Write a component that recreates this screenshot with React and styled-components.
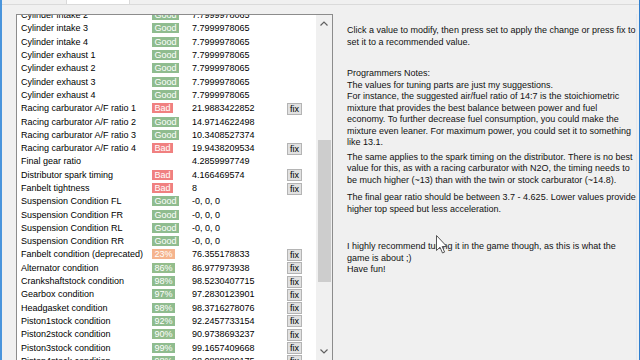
import React from "react";
import styled, { createGlobalStyle } from "styled-components";

const GlobalStyle = createGlobalStyle`
  html, body {
    margin: 0;
    padding: 0;
    background: #f0f0f0;
  }
  body {
    font-family: "Liberation Sans", Arial, sans-serif;
    font-size: 9px;
    color: #000;
  }
`;

const Window = styled.div`
  position: relative;
  width: 640px;
  height: 360px;
  box-sizing: border-box;
  border-left: 2px solid #4a95dc;
  border-right: 1px solid #2f7fcf;
  background: #f0f0f0;
  display: flex;
  flex-direction: column;
  overflow: hidden;
`;

const TabStrip = styled.div`
  height: 4px;
  flex: none;
  display: flex;
  border-bottom: 1px solid #dadada;
  padding-left: 64px;
`;

const Tab = styled.div`
  width: 62px;
  background: #fff;
  border-left: 1px solid #dadada;
  border-right: 1px solid #dadada;
`;

const Body = styled.div`
  flex: 1;
  min-height: 0;
  display: flex;
  padding: 9px 7px 0 14px;
`;

const ListBox = styled.div`
  width: 317px;
  flex: none;
  box-sizing: border-box;
  border: 1px solid #8c8c8c;
  border-bottom: none;
  background: #fff;
  display: flex;
  overflow: hidden;
`;

const Rows = styled.div`
  flex: 1;
  overflow: hidden;
`;

const RowsInner = styled.div`
  margin-top: -6px;
`;

const Row = styled.div`
  height: 13.3px;
  display: grid;
  grid-template-columns: 131px 40px 95px 15px;
  align-items: center;
  padding-left: 4px;
  white-space: nowrap;
  line-height: 11px;
`;

const tones = {
  good: "#8fbc8f",
  bad: "#f08080",
  warn: "#f5b48e",
  high: "#93bd8c",
};

const Badge = styled.span`
  justify-self: start;
  background: ${(p) => tones[p.$tone]};
  color: #fff;
  padding: 0 2.5px;
  height: 10px;
  line-height: 10px;
`;

const FixButton = styled.button`
  width: 15px;
  height: 12px;
  padding: 0;
  margin: 0;
  box-sizing: border-box;
  border: 1px solid #b4b4b4;
  background: #e1e1e1;
  font-family: inherit;
  font-size: 9px;
  line-height: 10px;
  color: #000;
`;

const ScrollBar = styled.div`
  width: 16px;
  flex: none;
  background: #f0f0f0;
  display: flex;
  flex-direction: column;
  align-items: center;
`;

const ArrowBtn = styled.div`
  height: 17px;
  flex: none;
  display: flex;
  align-items: center;
  justify-content: center;
`;

const Thumb = styled.div`
  width: 13px;
  height: 142px;
  margin-top: ${(p) => p.$offset}px;
  background: #cdcdcd;
  flex: none;
`;

const Notes = styled.div`
  flex: 1;
  padding-left: 14px;
  border-right: 1px solid #e2e8ef;
  font-size: 9px;
  line-height: 11.5px;
  color: #111;
  white-space: nowrap;
`;

const Para = styled.p`
  margin: ${(p) => p.$top}px 0 0 0;
`;

const Cursor = styled.svg`
  position: absolute;
  left: 434px;
  top: 235px;
`;

const rows = [
  ["Cylinder intake 2", "Good", "good", "7.7999978065", false],
  ["Cylinder intake 3", "Good", "good", "7.7999978065", false],
  ["Cylinder intake 4", "Good", "good", "7.7999978065", false],
  ["Cylinder exhaust 1", "Good", "good", "7.7999978065", false],
  ["Cylinder exhaust 2", "Good", "good", "7.7999978065", false],
  ["Cylinder exhaust 3", "Good", "good", "7.7999978065", false],
  ["Cylinder exhaust 4", "Good", "good", "7.7999978065", false],
  ["Racing carburator A/F ratio 1", "Bad", "bad", "21.9883422852", true],
  ["Racing carburator A/F ratio 2", "Good", "good", "14.9714622498", false],
  ["Racing carburator A/F ratio 3", "Good", "good", "10.3408527374", false],
  ["Racing carburator A/F ratio 4", "Bad", "bad", "19.9438209534", true],
  ["Final gear ratio", null, null, "4.2859997749", false],
  ["Distributor spark timing", "Bad", "bad", "4.166469574", true],
  ["Fanbelt tightness", "Bad", "bad", "8", true],
  ["Suspension Condition FL", "Good", "good", "-0, 0, 0", false],
  ["Suspension Condition FR", "Good", "good", "-0, 0, 0", false],
  ["Suspension Condition RL", "Good", "good", "-0, 0, 0", false],
  ["Suspension Condition RR", "Good", "good", "-0, 0, 0", false],
  ["Fanbelt condition (deprecated)", "23%", "warn", "76.355178833", true],
  ["Alternator condition", "86%", "high", "86.977973938", true],
  ["Crankshaftstock condition", "98%", "good", "98.5230407715", true],
  ["Gearbox condition", "97%", "good", "97.2830123901", true],
  ["Headgasket condition", "98%", "good", "98.3716278076", true],
  ["Piston1stock condition", "92%", "good", "92.2457733154", true],
  ["Piston2stock condition", "90%", "high", "90.9738693237", true],
  ["Piston3stock condition", "99%", "good", "99.1657409668", true],
  ["Piston4stock condition", "98%", "good", "98.0888889175", true],
];

function Chevron({ up }) {
  return (
    <svg width="8" height="5" viewBox="0 0 8 5">
      <path
        d={up ? "M0.5 4.5 L4 1 L7.5 4.5" : "M0.5 0.5 L4 4 L7.5 0.5"}
        fill="none"
        stroke="#606060"
        strokeWidth="1.2"
      />
    </svg>
  );
}

export default function App() {
  return (
    <Window>
      <GlobalStyle />
      <TabStrip>
        <Tab />
      </TabStrip>
      <Body>
        <ListBox>
          <Rows>
            <RowsInner>
              {rows.map(([name, label, tone, value, fix]) => (
                <Row key={name}>
                  <span>{name}</span>
                  <span>{label && <Badge $tone={tone}>{label}</Badge>}</span>
                  <span>{value}</span>
                  <span>{fix && <FixButton>fix</FixButton>}</span>
                </Row>
              ))}
            </RowsInner>
          </Rows>
          <ScrollBar>
            <ArrowBtn>
              <Chevron up />
            </ArrowBtn>
            <Thumb $offset={108} />
            <div style={{ flex: 1 }} />
            <ArrowBtn>
              <Chevron />
            </ArrowBtn>
          </ScrollBar>
        </ListBox>
        <Notes>
          <Para $top={11}>
            Click a value to modify, then press set to apply the change or press fix to
            <br />
            set it to a recommended value.
          </Para>
          <Para $top={20}>
            Programmers Notes:
            <br />
            The values for tuning parts are just my suggestions.
            <br />
            For instance, the suggested air/fuel ratio of 14:7 is the stoichiometric
            <br />
            mixture that provides the best balance between power and fuel
            <br />
            economy. To further decrease fuel consumption, you could make the
            <br />
            mixture even leaner. For maximum power, you could set it to something
            <br />
            like 13.1.
          </Para>
          <Para $top={3}>
            The same applies to the spark timing on the distributor. There is no best
            <br />
            value for this, as with a racing carburator with N2O, the timing needs to
            <br />
            be much higher (~13) than with the twin or stock carburator (~14.8).
          </Para>
          <Para $top={6}>
            The final gear ratio should be between 3.7 - 4.625. Lower values provide
            <br />
            higher top speed but less acceleration.
          </Para>
          <Para $top={26}>
            I highly recommend tuning it in the game though, as this is what the
            <br />
            game is about ;)
            <br />
            Have fun!
          </Para>
        </Notes>
      </Body>
      <Cursor width="12" height="19" viewBox="0 0 12 19">
        <path
          d="M0.5 0.5 L0.5 15.5 L4 12.2 L6.5 18 L8.6 17.1 L6.2 11.5 L10.8 11.5 Z"
          fill="#fff"
          stroke="#555"
          strokeWidth="1"
        />
      </Cursor>
    </Window>
  );
}
